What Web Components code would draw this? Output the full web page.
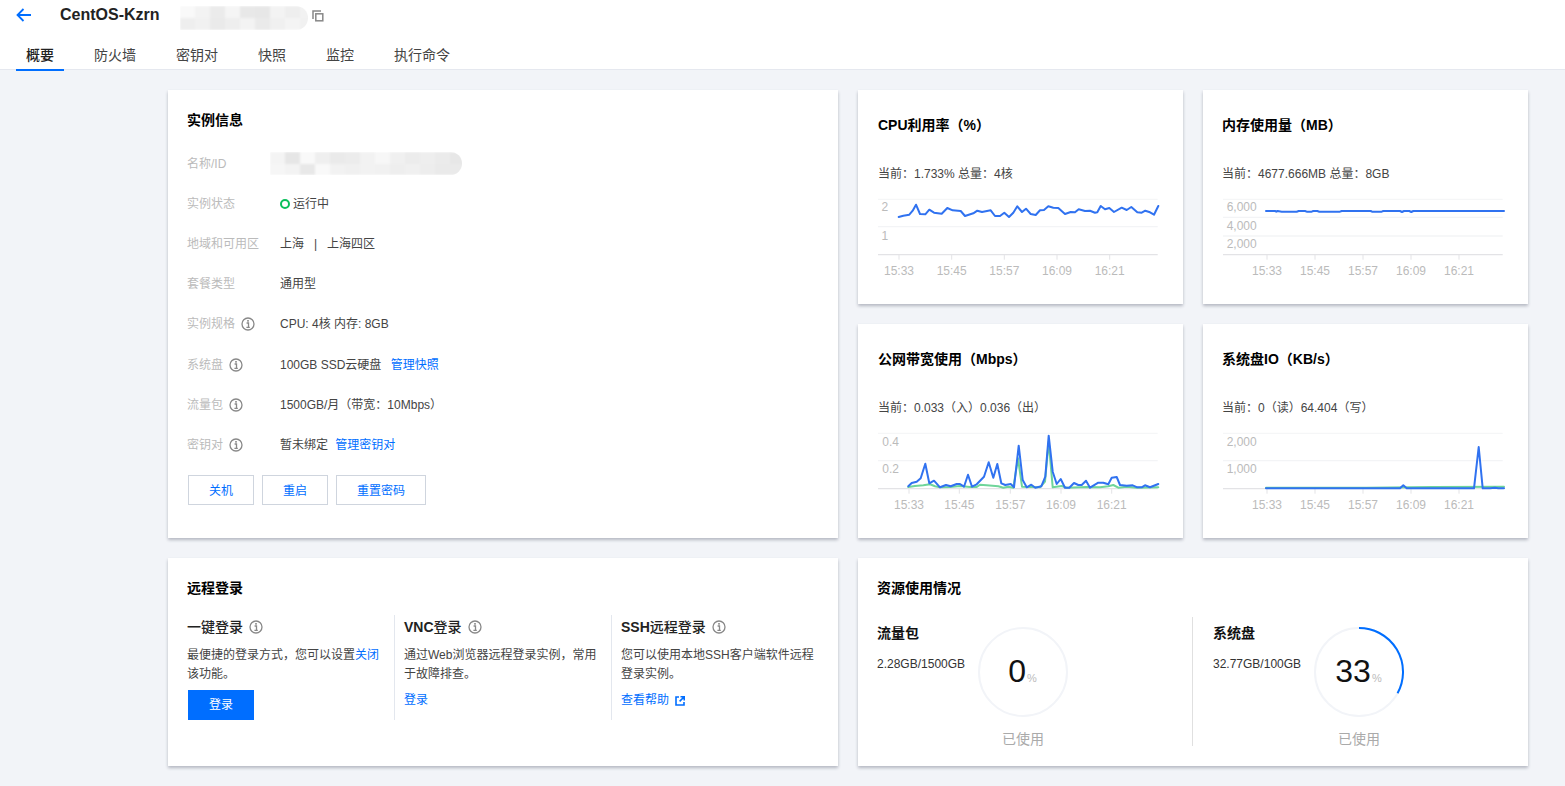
<!DOCTYPE html>
<html lang="zh-CN"><head><meta charset="utf-8"><title>CentOS-Kzrn</title>
<style>
html,body{margin:0;padding:0}
body{background:#f2f4f8;font:12px/20px "Liberation Sans","Noto Sans CJK SC",sans-serif;color:#444;width:1565px;height:786px;overflow:hidden}
</style></head>
<body>
<x-page>
  <x-topbar slot="top" name="CentOS-Kzrn"></x-topbar>
  <x-card slot="info" heading="实例信息" pad>
    <x-row label="名称/ID" style="margin-top:12.6px"><x-redact w="192" h="23" seed="7" style="margin-left:-10px"></x-redact></x-row>
    <x-row label="实例状态"><x-status>运行中</x-status></x-row>
    <x-row label="地域和可用区">上海 &nbsp; | &nbsp; 上海四区</x-row>
    <x-row label="套餐类型">通用型</x-row>
    <x-row label="实例规格" tip>CPU: 4核 内存: 8GB</x-row>
    <x-row label="系统盘" tip>100GB SSD云硬盘 <x-link style="margin-left:6px">管理快照</x-link></x-row>
    <x-row label="流量包" tip>1500GB/月（带宽：10Mbps）</x-row>
    <x-row label="密钥对" tip>暂未绑定 <x-link style="margin-left:4px">管理密钥对</x-link></x-row>
    <x-actions>
      <x-btn w="66">关机</x-btn><x-btn w="66">重启</x-btn><x-btn w="90">重置密码</x-btn>
    </x-actions>
  </x-card>

  <x-card slot="cpu" heading="CPU利用率（%）" chart>
    <x-sub>当前：1.733% 总量：4核</x-sub>
    <x-chart dx="-18" dy="-105" grid="328,410,494" gx="54,893" ticks="117,275,433,591,749" tl="15:33,15:45,15:57,16:09,16:21" yl="2@350;1@435" yr="85"
      blue="116,381 130,377 148,374 158,362 168,344 180,372 196,373 208,359 222,368 245,371 262,354 278,361 302,363 315,378 340,370 352,362 366,366 392,361 405,378 420,378 433,368 447,381 460,368 472,349 486,366 498,356 512,372 527,375 540,361 552,360 565,349 580,353 595,354 615,372 632,366 645,367 656,358 675,363 690,362 705,368 712,367 722,348 735,358 748,354 762,366 785,353 800,360 814,351 832,367 845,368 856,362 870,367 882,374 895,348"></x-chart>
  </x-card>

  <x-card slot="mem" heading="内存使用量（MB）" chart pad>
    <x-sub>当前：4677.666MB 总量：8GB</x-sub>
    <x-chart dx="-22" dy="-105" grid="328,382,438,494" gx="69,908" ticks="201,345,489,633,777" tl="15:33,15:45,15:57,16:09,16:21" yl="6,000@350;4,000@407;2,000@461" yr="170"
      blue="198,363 225,363 229,365 233,363 245,365 290,365 296,363 315,363 320,365 335,365 340,363 352,363 358,365 420,365 425,363 512,363 516,365 545,365 550,363 600,363 606,366 612,363 628,363 634,366 640,363 912,363"></x-chart>
  </x-card>

  <x-card slot="net" heading="公网带宽使用（Mbps）" chart>
    <x-sub>当前：0.033（入）0.036（出）</x-sub>
    <x-chart dx="-18" dy="-104" grid="325,407,491" gx="54,893" ticks="147,298,451,603,755" tl="15:33,15:45,15:57,16:09,16:21" yl="0.4@348;0.2@431" yr="117"
      green="145,486 165,483 190,481 210,478 225,484 240,487 270,486 300,483 330,486 350,486 360,479 380,481 415,484 430,488 445,485 460,488 474,400 486,485 540,487 555,470 566,350 578,487 605,483 620,488 680,486 720,487 745,484 760,480 775,488 800,485 830,488 895,487"
      blue="145,484 155,474 170,470 182,460 196,416 208,475 222,467 240,487 258,480 272,484 290,477 300,477 312,485 324,449 336,485 350,478 372,455 386,412 400,458 412,417 424,475 436,480 452,477 462,487 476,362 488,465 500,487 514,479 526,488 544,484 556,455 566,332 578,440 590,477 602,462 615,488 628,488 642,474 655,480 665,480 678,467 690,488 715,473 730,473 745,478 755,458 770,456 780,480 800,482 818,481 832,487 845,487 855,481 870,487 895,477"></x-chart>
  </x-card>

  <x-card slot="io" heading="系统盘IO（KB/s）" chart pad>
    <x-sub>当前：0（读）64.404（写）</x-sub>
    <x-chart dx="-22" dy="-104" grid="325,407,491" gx="69,908" ticks="201,345,489,633,777" tl="15:33,15:45,15:57,16:09,16:21" yl="2,000@348;1,000@431" yr="170"
      green="198,488 500,488 700,486 912,485"
      blue="198,490 600,490 610,481 620,490 822,490 836,366 848,490 870,490 885,488 895,490 912,490"></x-chart>
  </x-card>

  <x-card slot="login" heading="远程登录" pad>
    <x-login-cols>
      <x-login-col heading="一键登录">
        最便捷的登录方式，您可以设置<x-link>关闭</x-link>该功能。
        <x-btn slot="action" primary w="66">登录</x-btn>
      </x-login-col>
      <x-login-col heading="<b>VNC</b>登录" divided>
        通过Web浏览器远程登录实例，常用于故障排查。
        <x-link slot="action">登录</x-link>
      </x-login-col>
      <x-login-col heading="<b>SSH</b>远程登录" divided>
        您可以使用本地SSH客户端软件远程登录实例。
        <x-link slot="action" external>查看帮助</x-link>
      </x-login-col>
    </x-login-cols>
  </x-card>

  <x-card slot="usage" heading="资源使用情况" pad>
    <x-usage>
      <x-meter heading="流量包" value="2.28GB/1500GB" pct="0"></x-meter>
      <x-meter heading="系统盘" value="32.77GB/100GB" pct="33" divided></x-meter>
    </x-usage>
  </x-card>
</x-page>

<script>
const FONT='"Liberation Sans","Noto Sans CJK SC",sans-serif';
const INFO=`<svg width="14" height="14" viewBox="0 0 14 14" fill="none" style="display:block"><circle cx="7" cy="7" r="6" stroke="#888" stroke-width="1.3"/><rect x="6.2" y="3" width="1.6" height="1.7" fill="#888"/><path d="M5.6 6h1.9v4.4M5.4 10.4h3.4" stroke="#888" stroke-width="1.3"/></svg>`;
function def(name,html,extra){
  class C extends HTMLElement{
    constructor(){super();this.attachShadow({mode:'open'}).innerHTML=html;}
    connectedCallback(){ if(extra) extra.call(this,this.shadowRoot); }
  }
  customElements.define(name,C);
}

def('x-page',`<style>
:host{display:block}
.main{display:grid;grid-template-columns:670px 325px 325px;grid-template-rows:214px 214px 208px;gap:20px;padding:20px 0 0 168px}
.a{grid-row:1/3}
</style>
<slot name="top"></slot>
<div class="main">
 <div class="a"><slot name="info"></slot></div>
 <slot name="cpu"></slot><slot name="mem"></slot>
 <slot name="net"></slot><slot name="io"></slot>
 <slot name="login"></slot>
 <div style="grid-column:2/4"><slot name="usage"></slot></div>
</div>`);

def('x-topbar',`<style>
:host{display:block;background:#fff;height:69px;border-bottom:1px solid #e5e8ef;font-family:${FONT};box-sizing:content-box}
.r{display:flex;align-items:center;height:30px;padding-left:16px}
.name{font:bold 16px/20px ${FONT};color:#222;margin-left:29px;width:120px}
.copy{margin:2px 0 0 4px}
.tabs{display:flex;gap:20px;padding:10px 0 0 16px;height:29px}
.t{padding:0 10px;font-size:14px;line-height:30px;color:#444;height:29px}
.t.on{color:#222;border-bottom:2px solid #006eff;font-weight:500}
</style>
<div class="r">
 <svg width="15" height="14" viewBox="0 0 15 14" fill="none"><path d="M15 7H1.5M7.5 1 1.5 7l6 6" stroke="#006eff" stroke-width="1.8"/></svg>
 <span class="name" id="n"></span>
 <x-redact w="128" h="24" seed="3" style="margin-top:6px"></x-redact>
 <svg class="copy" width="12" height="12" viewBox="0 0 12 12" fill="none"><path d="M1 9V1h8" stroke="#888" stroke-width="1.5"/><rect x="3.8" y="3.8" width="7" height="7" stroke="#888" stroke-width="1.5"/></svg>
</div>
<div class="tabs"><span class="t on">概要</span><span class="t">防火墙</span><span class="t">密钥对</span><span class="t">快照</span><span class="t">监控</span><span class="t">执行命令</span></div>`,
function(s){s.getElementById('n').textContent=this.getAttribute('name');});

def('x-redact',`<style>:host{display:block;overflow:hidden;border-radius:0 12px 12px 0}
.g{display:grid;filter:blur(1px)}.g i{display:block}</style><div class="g" id="g"></div>`,
function(s){
  const w=+this.getAttribute('w'),h=+this.getAttribute('h');let seed=+this.getAttribute('seed');
  this.style.width=w+'px';this.style.height=h+'px';
  const cols=Math.ceil(w/15),rows=2,g=s.getElementById('g');
  g.style.gridTemplateColumns=`repeat(${cols},15px)`;g.style.gridTemplateRows=`repeat(${rows},${h/rows}px)`;
  let o='';for(let i=0;i<cols*rows;i++){seed=(seed*137+59)%251;const c=230+seed%20;o+=`<i style="background:rgb(${c},${c},${c})"></i>`;}
  g.innerHTML=o;
});

def('x-card',`<style>
:host{display:block;box-sizing:border-box;height:100%;background:#fff;box-shadow:0 2px 3px rgba(54,58,80,.32);padding:0 20px;font-family:${FONT};color:#444}
:host([pad]){padding-left:19px}
h3{margin:0;font:bold 14px/20px ${FONT};color:#000;padding-top:20px;height:41px;box-sizing:border-box}
:host([chart]) h3{padding-top:25px;height:45px}
</style><h3 id="h"></h3><slot></slot>`,
function(s){s.getElementById('h').textContent=this.getAttribute('heading');});

def('x-row',`<style>
:host{display:flex;align-items:center;height:40.2px;font-size:12px;color:#444}
.l{width:93px;color:#bbb;display:flex;align-items:center;flex:none;gap:6px}
.v{display:flex;align-items:center;white-space:pre-wrap}
</style><div class="l"><span id="t"></span><span id="i"></span></div><div class="v"><slot></slot></div>`,
function(s){s.getElementById('t').textContent=this.getAttribute('label');
 if(this.hasAttribute('tip'))s.getElementById('i').innerHTML=INFO;else s.getElementById('i').remove();});

def('x-status',`<style>:host{display:inline-flex;align-items:center;gap:3px}
i{width:6px;height:6px;border:2px solid #0abf5b;border-radius:50%;display:block;margin-top:1px}</style><i></i><slot></slot>`);

def('x-link',`<style>:host{color:#006eff;cursor:pointer}
:host([external]){display:inline-flex;align-items:center;gap:6px}
svg{display:block}</style><slot></slot><span id="e"></span>`,
function(s){if(this.hasAttribute('external'))s.getElementById('e').innerHTML=`<svg width="10" height="10" viewBox="0 0 10 10" fill="none"><path d="M4 1H1v8h8V6" stroke="#006eff" stroke-width="1.6"/><path d="M5.5.8h3.7v3.7M9 1 4.6 5.4" stroke="#006eff" stroke-width="1.6"/></svg>`;else s.getElementById('e').remove();});

def('x-actions',`<style>:host{display:flex;gap:8px;margin:10px 0 0 1px}</style><slot></slot>`);

def('x-btn',`<style>
:host{display:inline-flex;align-items:center;justify-content:center;box-sizing:border-box;height:30px;border:1px solid #cfd5de;color:#006eff;font-size:12px;background:#fff;padding-top:1px}
:host([primary]){background:#006eff;border-color:#006eff;color:#fff}
</style><slot></slot>`,function(){this.style.width=this.getAttribute('w')+'px';});

def('x-sub',`<style>:host{display:block;margin-top:29px;font-size:12px;line-height:20px;color:#444}</style><slot></slot>`);

def('x-chart',`<style>:host{display:block;margin-top:11px}svg{display:block;overflow:visible}
text{font:12px ${FONT};fill:#bbb}</style><svg id="s" width="285" height="90" viewBox="0 0 285 90"></svg>`,
function(s){
  const dx=+this.getAttribute('dx'),dy=+this.getAttribute('dy');
  const X=z=>(+z/3+dx).toFixed(1),Y=z=>(+z/3+dy).toFixed(1);
  const grid=this.getAttribute('grid').split(',');
  const [x0,x1]=this.getAttribute('gx').split(',');
  const ticks=this.getAttribute('ticks').split(',');
  const tl=this.getAttribute('tl').split(',');
  let o='';
  grid.forEach((g,i)=>{const last=i==grid.length-1;
    o+=`<line x1="${X(x0)}" x2="${X(x1)}" y1="${Y(g)}" y2="${Y(g)}" stroke="${last?'#e3e3e6':'#f3f4f6'}" stroke-width="${last||i>0?1.3:1}"/>`;});
  const by=grid[grid.length-1];
  ticks.forEach((t,i)=>{o+=`<line x1="${X(t)}" x2="${X(t)}" y1="${Y(by)}" y2="${(+Y(by)+5)}" stroke="#e3e3e6"/>`;
    o+=`<text x="${X(t)}" y="${(+Y(by)+20.5)}" text-anchor="middle">${tl[i]}</text>`;});
  const yr=this.getAttribute('yr');
  this.getAttribute('yl').split(';').forEach(p=>{const [t,z]=p.split('@');
    o+=`<text x="${X(yr)}" y="${(+Y(z)+4.5)}" text-anchor="end">${t}</text>`;});
  const line=(a,c,w)=>{const v=this.getAttribute(a);if(!v)return;
    const pts=v.trim().split(/\s+/).map(p=>{const [x,y]=p.split(',');return X(x)+','+Y(y)}).join(' ');
    o+=`<polyline points="${pts}" fill="none" stroke="${c}" stroke-width="${w}" stroke-linejoin="round" stroke-linecap="round"/>`;};
  line('green','#6fd59a',2);line('blue','#3072f0',2);
  s.getElementById('s').innerHTML=o;
});

def('x-login-cols',`<style>:host{display:grid;grid-template-columns:207px 217px 217px;margin-top:16px;height:104px}</style><slot></slot>`);

def('x-login-col',`<style>
:host{display:block;box-sizing:border-box;padding-right:14px;font-size:12px;line-height:19px;color:#444}
:host([divided]){border-left:1px solid #e3e7ee;padding-left:9px}
.h{display:flex;align-items:center;gap:6px;font:500 14px/20px ${FONT};color:#222;height:20px;margin:2px 0 9px}
.a{margin-top:7px;display:block}
::slotted(x-btn){display:flex;margin:-1px 0 0 1px}
</style><div class="h"><span id="h"></span><span>${INFO}</span></div><div><slot></slot></div><div class="a"><slot name="action"></slot></div>`,
function(s){s.getElementById('h').innerHTML=this.getAttribute('heading');});

def('x-usage',`<style>:host{display:grid;grid-template-columns:315px 1fr;margin-top:18px;height:129px}</style><slot></slot>`);

def('x-meter',`<style>
:host{display:flex;box-sizing:border-box;height:129px}
:host([divided]){border-left:1px solid #e0e0e0;padding-left:20px}
.t{width:101px;flex:none}
.n{font:bold 14px/20px ${FONT};color:#111;margin:6px 0 11px}
.v{font-size:12px;line-height:20px;color:#333;white-space:nowrap}
.m{width:90px;padding-top:10px;text-align:center}
.ring{position:relative;width:90px;height:90px}
svg{display:block}
.c{position:absolute;inset:0;display:flex;align-items:baseline;justify-content:center;line-height:88px;padding-right:1px;box-sizing:border-box}
.p{font-size:32px;color:#111;font-weight:400}
.u{font-size:11px;color:#bbb;margin-left:1px}
.k{font-size:14px;line-height:20px;color:#aaa;margin-top:12px;white-space:nowrap}
</style>
<div class="t"><div class="n" id="n"></div><div class="v" id="v"></div></div>
<div class="m"><div class="ring"><svg width="90" height="90" viewBox="0 0 90 90" id="s"></svg>
<div class="c"><span class="p" id="p"></span><span class="u">%</span></div></div><div class="k">已使用</div></div>`,
function(s){
  s.getElementById('n').textContent=this.getAttribute('heading');
  s.getElementById('v').textContent=this.getAttribute('value');
  const p=+this.getAttribute('pct');s.getElementById('p').textContent=p;
  let o=`<circle cx="45" cy="45" r="44" fill="none" stroke="#f2f4f8" stroke-width="2"/>`;
  if(p>0){const a=2*Math.PI*p/100;
    o+=`<path d="M45 1A44 44 0 0 1 ${(45+44*Math.sin(a)).toFixed(2)} ${(45-44*Math.cos(a)).toFixed(2)}" fill="none" stroke="#006eff" stroke-width="2"/>`;}
  s.getElementById('s').innerHTML=o;
});
</script>
</body></html>
